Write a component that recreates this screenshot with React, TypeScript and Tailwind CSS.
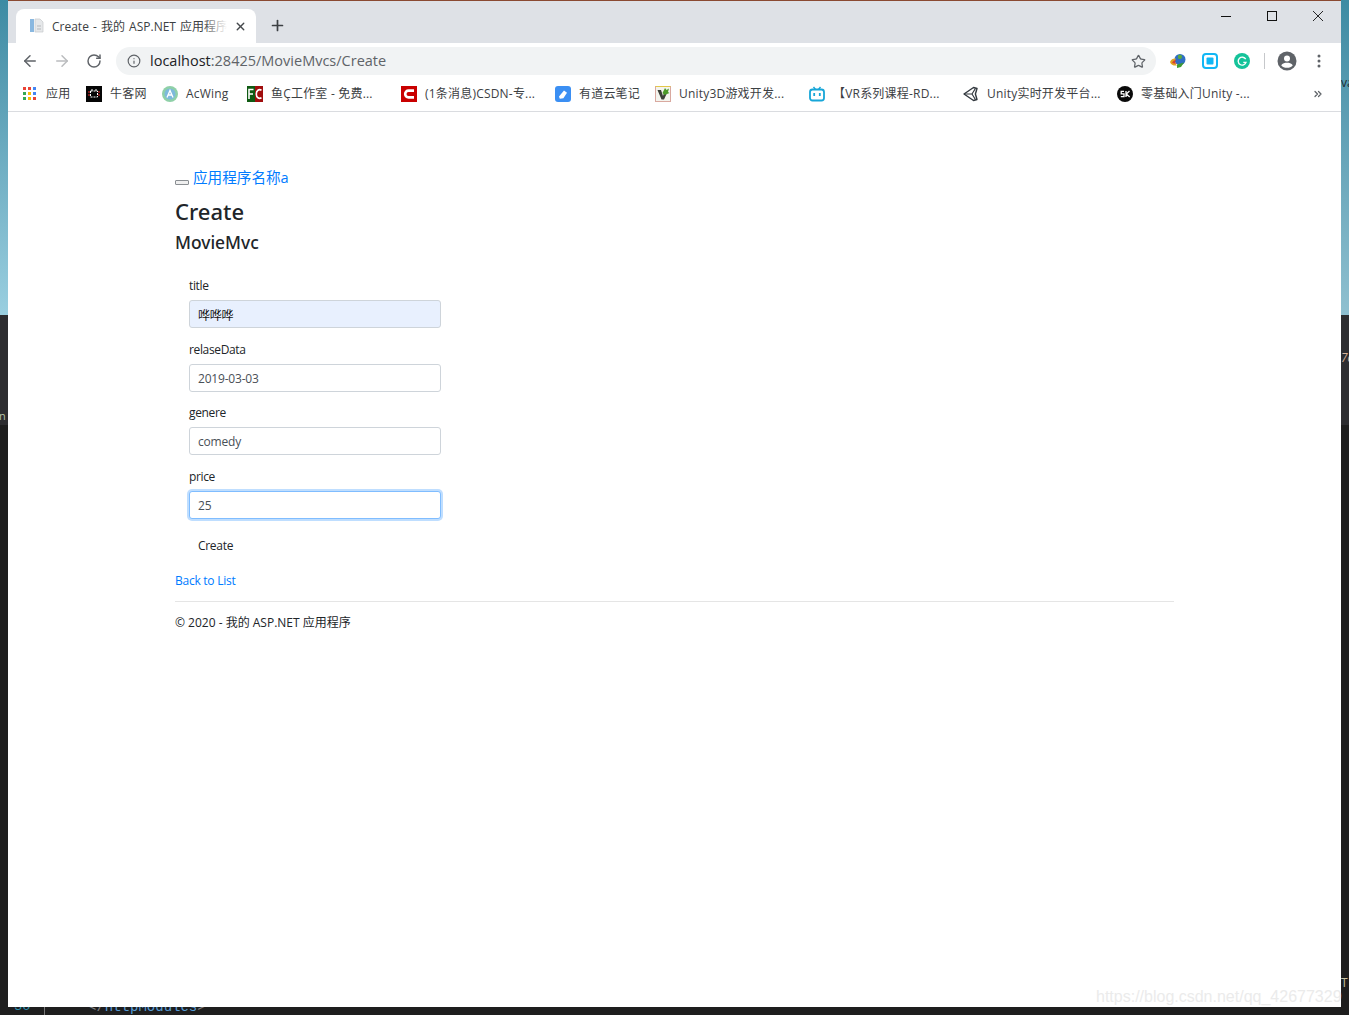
import React from 'react';
import { ArrowLeft, ArrowRight, ChevronsRight, Info, Plus, RotateCw, Star, X } from 'lucide-react';

const font = "font-['Open_Sans','Noto_Sans_CJK_SC',sans-serif]";

const Apps = () => (
    <svg width="14" height="14" viewBox="0 0 14 14">
        <rect x="0" y="0" width="3" height="3" fill="#ea4335" />
        <rect x="5" y="0" width="3" height="3" fill="#ea4335" />
        <rect x="10" y="0" width="3" height="3" fill="#4285f4" />
        <rect x="0" y="5" width="3" height="3" fill="#34a853" />
        <rect x="5" y="5" width="3" height="3" fill="#fbbc05" />
        <rect x="10" y="5" width="3" height="3" fill="#4285f4" />
        <rect x="0" y="10" width="3" height="3" fill="#34a853" />
        <rect x="5" y="10" width="3" height="3" fill="#fbbc05" />
        <rect x="10" y="10" width="3" height="3" fill="#ea4335" />
    </svg>
);

const Nowcoder = () => (
    <svg width="16" height="16" viewBox="0 0 16 16">
        <rect width="16" height="16" fill="#050505" />
        <rect x="4.500" y="5" width="7" height="6" fill="none" stroke="#fff" strokeWidth="1" strokeDasharray="2 1" />
        <path d="M6 3v2M10 3v2" stroke="#fff" />
        <path d="M2 6h2M2 9h2M12 6h2M12 9h2" stroke="#e33" />
    </svg>
);

const AcWing = () => (
    <svg width="16" height="16" viewBox="0 0 16 16">
        <circle cx="8" cy="8" r="8" fill="#8fd0a8" />
        <circle cx="8" cy="8" r="5.500" fill="#7db9dc" />
        <path d="M5 11.500 8 4.500l3 7M6.200 9h3.600" stroke="#fff" strokeWidth="1.3" fill="none" />
    </svg>
);

const Fishc = () => (
    <svg width="16" height="16" viewBox="0 0 16 16">
        <rect width="8" height="16" fill="#0f5a12" />
        <rect x="8" width="8" height="16" fill="#a00d0d" />
        <path d="M2 13V3.500h4.500M2 8h4" stroke="#fff" strokeWidth="1.6" fill="none" />
        <path d="M14.500 4.200C12 2.800 9.300 4.400 9.300 8s2.700 5.200 5.200 3.800" stroke="#fff" strokeWidth="1.6" fill="none" />
    </svg>
);

const Csdn = () => (
    <svg width="16" height="16" viewBox="0 0 16 16">
        <rect width="16" height="16" fill="#c90000" />
        <path d="M13 4.600H7.500C5.500 4.600 4.200 6 4.200 8s1.300 3.400 3.300 3.400H13" stroke="#fff" strokeWidth="2.600" fill="none" />
    </svg>
);

const Youdao = () => (
    <svg width="16" height="16" viewBox="0 0 16 16">
        <rect width="16" height="16" rx="3" fill="#3b8ff3" />
        <path d="M4 10.500 9 4.500l3 2.200-3.600 5.600-3.600.5z" fill="#fff" />
    </svg>
);

const Unity3d = () => (
    <svg width="16" height="16" viewBox="0 0 16 16">
        <rect x="0.500" y="0.500" width="15" height="15" fill="#f4f4ee" stroke="#d9a9a0" />
        <path d="M0.500 0.500h15" stroke="#e3c74a" />
        <path d="M2.500 4H6l2 6 1-3h3l-3 6.500H6.500z" fill="#3c4038" />
        <path d="M7.500 7 10 2l1.500 2L14 2.500 13 6l1.500 1-5 2z" fill="#4c9a2a" />
    </svg>
);

const Bilibili = () => (
    <svg width="16" height="16" viewBox="0 0 16 16">
        <path d="M4.500 1 6.500 3.500M11.500 1 9.500 3.500" stroke="#17a6d8" strokeWidth="1.400" />
        <rect x="1" y="3.500" width="14" height="11" rx="2.500" fill="none" stroke="#17a6d8" strokeWidth="1.800" />
        <rect x="4.300" y="7" width="1.800" height="3" fill="#17a6d8" />
        <rect x="9.900" y="7" width="1.800" height="3" fill="#17a6d8" />
    </svg>
);

const UnityLogo = () => (
    <svg width="16" height="16" viewBox="0 0 16 16">
        <path d="M1 8 10.500 1.500l3.500 1-1.600 5.500 1.600 5.500-3.500 1z" fill="none" stroke="#33393f" strokeWidth="1.400" strokeLinejoin="round" />
        <path d="M1 8h8l3.400-5.500M9 8l3.400 5.500" fill="none" stroke="#33393f" strokeWidth="1.200" />
    </svg>
);

const Sk = () => (
    <svg width="16" height="16" viewBox="0 0 16 16">
        <circle cx="8" cy="8" r="8" fill="#0a0a0a" />
        <path d="M7 5.300H4.200v2.600H7v2.700H3.800M9 5v6M12.500 5 9.300 8l3.400 3" stroke="#fff" strokeWidth="1.300" fill="none" />
    </svg>
);

const Idm = () => (
    <svg width="18" height="16" viewBox="0 0 18 16">
        <circle cx="11" cy="6.500" r="5.500" fill="#2f6fc4" />
        <path d="M9 2.500c2-1.500 4-.5 4 1.500s-3 3-4 1z" fill="#5cab3c" />
        <path d="M1 9c1-3 4-4 6-3.500L5 9l3 3.500C5 13 2 12 1 9z" fill="#e2a321" />
        <path d="M3 10c1-2 2-3 4-3l-1 2 2 2z" fill="#d8402c" />
        <path d="M8 15V11.500L15 9.500 12 14z" fill="#3f9a32" />
    </svg>
);

const Ext = () => (
    <svg width="16" height="16" viewBox="0 0 16 16">
        <rect x="1" y="1" width="14" height="14" rx="3" fill="#fff" stroke="#12b7f5" strokeWidth="2" />
        <rect x="4.500" y="4.500" width="7" height="7" rx="1" fill="#12b7f5" />
    </svg>
);

const Grammarly = () => (
    <svg width="16" height="16" viewBox="0 0 16 16">
        <circle cx="8" cy="8" r="8" fill="#15c39a" />
        <path d="M11.700 6.200A4 4 0 1 0 12 9.400H9.300" stroke="#fff" strokeWidth="1.400" fill="none" />
    </svg>
);

const Avatar = () => (
    <svg width="20" height="20" viewBox="0 0 20 20">
        <circle cx="10" cy="10" r="9.500" fill="#5f6368" />
        <circle cx="10" cy="7.500" r="3" fill="#fff" />
        <path d="M4.200 14.200C5.500 12 8 11.700 10 11.700s4.500.3 5.800 2.500C14.500 16 12.300 16.800 10 16.800s-4.500-.8-5.800-2.600z" fill="#fff" />
    </svg>
);

const bookmarks = [
    { icon: <Apps />, label: '应用', width: 'w-[63px]', slot: 'w-[23px]' },
    { icon: <Nowcoder />, label: '牛客网', width: 'w-[76px]', slot: 'w-[24px]' },
    { icon: <AcWing />, label: 'AcWing', width: 'w-[85px]', slot: 'w-[24px]' },
    { icon: <Fishc />, label: '鱼Ç工作室 - 免费...', width: 'w-[154px]', slot: 'w-[24px]' },
    { icon: <Csdn />, label: '(1条消息)CSDN-专...', width: 'w-[154px]', slot: 'w-[24px]' },
    { icon: <Youdao />, label: '有道云笔记', width: 'w-[100px]', slot: 'w-[24px]' },
    { icon: <Unity3d />, label: 'Unity3D游戏开发...', width: 'w-[154px]', slot: 'w-[24px]' },
    { icon: <Bilibili />, label: '【VR系列课程-RD...', width: 'w-[154px]', slot: 'w-[24px]' },
    { icon: <UnityLogo />, label: 'Unity实时开发平台...', width: 'w-[154px]', slot: 'w-[24px]' },
    { icon: <Sk />, label: '零基础入门Unity -...', width: 'w-[150px]', slot: 'w-[24px]' },
];

const Field = ({ label, value, tone, gap }: { label: string; value: string; tone?: 'autofill' | 'focus'; gap: string }) => (
    <div className={gap}>
        <label className="block h-[20px] text-[12px] leading-[11px] tracking-[-0.35px] text-[#212529]">{label}</label>
        <input
            readOnly
            value={value}
            className={`block w-[252px] h-[28px] rounded-[3px] border px-[8px] pt-[1px] text-[12px] tracking-[-0.2px] ${
                tone === 'autofill'
                    ? 'bg-[#e8f0fe] border-[#ced4da] text-[#111]'
                    : tone === 'focus'
                    ? 'bg-white border-[#80bdff] text-[#495057] shadow-[0_0_0_2px_rgba(0,123,255,0.25)] outline-none'
                    : 'bg-white border-[#ced4da] text-[#495057]'
            }`}
        />
    </div>
);

export default function App() {
    return (
        <div className={`relative flex w-[1349px] h-[1015px] overflow-hidden bg-[#1e1e1e] ${font}`}>
            {/* desktop behind the window, left */}
            <div className="w-[8px] flex flex-col shrink-0">
                <div className="h-[315px] bg-gradient-to-b from-[#3d8ba3] to-[#9acfe0]" />
                <div className="h-[110px] bg-[#2d2d30] overflow-hidden flex items-end">
                    <span className="text-[11px] leading-[18px] ml-[-1px] text-[#b8c4a8]">n</span>
                </div>
                <div className="flex-1 bg-[#1e1e1e]" />
            </div>

            <div className="w-[1333px] flex flex-col shrink-0">
                <div className="flex-1 flex flex-col bg-white">
                    {/* tab strip */}
                    <div className="h-[43px] flex bg-[#dee1e6] border-t border-[#8a4a32] shrink-0">
                        <div className="ml-[8px] mt-[8px] w-[240px] h-[34px] bg-white rounded-t-[8px] flex items-center pl-[13px] pr-[9px] shrink-0">
                            <svg width="16" height="16" viewBox="0 0 16 16" className="shrink-0">
                                <rect x="1" y="1" width="4" height="13" fill="#8ab8e0" />
                                <path d="M6 1h5l3 3v10H6z" fill="#e6e8ea" stroke="#c5c8cb" strokeWidth="0.7" />
                                <path d="M8 8h4M8 11h4" stroke="#b5b8bb" />
                            </svg>
                            <div className="relative ml-[7px] w-[175px] pt-[2px] overflow-hidden whitespace-nowrap text-[12px] [word-spacing:1px] text-[#3c4043]">
                                Create - 我的 ASP.NET 应用程序
                                <div className="absolute right-0 top-0 bottom-0 w-[24px] bg-gradient-to-r from-transparent to-white" />
                            </div>
                            <X size={13} strokeWidth={2.5} className="ml-[7px] mt-[1px] text-[#45484c] shrink-0" />
                        </div>
                        <Plus size={17} strokeWidth={2.4} className="ml-[13px] mt-[16px] text-[#3c4043] shrink-0" />
                        <div className="ml-auto flex items-start text-[#111]">
                            <div className="w-[46px] h-[29px] flex items-center justify-center">
                                <svg width="10" height="10" viewBox="0 0 10 10"><path d="M0 5.500h10" stroke="currentColor" /></svg>
                            </div>
                            <div className="w-[46px] h-[29px] flex items-center justify-center">
                                <svg width="10" height="10" viewBox="0 0 10 10"><rect x="0.500" y="0.500" width="9" height="9" fill="none" stroke="currentColor" /></svg>
                            </div>
                            <div className="w-[46px] h-[29px] flex items-center justify-center">
                                <svg width="10" height="10" viewBox="0 0 10 10"><path d="M0 0l10 10M10 0 0 10" stroke="currentColor" strokeWidth="0.9" /></svg>
                            </div>
                        </div>
                    </div>

                    {/* toolbar */}
                    <div className="h-[36px] flex items-center bg-white shrink-0">
                        <ArrowLeft size={18} strokeWidth={2} className="ml-[13px] text-[#5f6368] shrink-0" />
                        <ArrowRight size={18} strokeWidth={2} className="ml-[14px] text-[#babcbe] shrink-0" />
                        <RotateCw size={16} strokeWidth={2.2} className="ml-[15px] text-[#5f6368] shrink-0" />
                        <div className="ml-[14px] w-[1040px] h-[28px] rounded-full bg-[#f1f3f4] flex items-center pl-[11px] pr-[10px] shrink-0">
                            <Info size={14} strokeWidth={2} className="text-[#5f6368] shrink-0" />
                            <span className="ml-[9px] text-[14.5px] whitespace-nowrap text-[#5f6368]">
                                <span className="text-[#202124]">localhost</span>:28425/MovieMvcs/Create
                            </span>
                            <Star size={15} strokeWidth={2} className="ml-auto text-[#5f6368] shrink-0" />
                        </div>
                        <div className="ml-[13px] flex items-center gap-[15px] shrink-0">
                            <Idm />
                            <Ext />
                            <div className="ml-[1px] flex"><Grammarly /></div>
                        </div>
                        <div className="ml-[14px] w-px h-[16px] bg-[#c6c8cb] shrink-0" />
                        <div className="ml-[12px] shrink-0"><Avatar /></div>
                        <svg width="4" height="14" viewBox="0 0 4 14" className="ml-[20px] shrink-0">
                            <circle cx="2" cy="2" r="1.500" fill="#5f6368" />
                            <circle cx="2" cy="7" r="1.500" fill="#5f6368" />
                            <circle cx="2" cy="12" r="1.500" fill="#5f6368" />
                        </svg>
                    </div>

                    {/* bookmarks bar */}
                    <div className="h-[33px] flex items-center pl-[15px] pb-[2px] bg-white border-b border-[#dadce0] shrink-0">
                        {bookmarks.map((b) => (
                            <div key={b.label} className={`${b.width} flex items-center shrink-0 whitespace-nowrap text-[12px] tracking-[0.2px] text-[#3c4043]`}>
                                <span className={`${b.slot} shrink-0 flex`}>{b.icon}</span>
                                <span>{b.label}</span>
                            </div>
                        ))}
                        <ChevronsRight size={12} strokeWidth={2.5} className="ml-[45px] text-[#5f6368] shrink-0" />
                    </div>

                    {/* page */}
                    <div className="pl-[167px] w-[1166px] pt-[57px] text-[#212529]">
                        <div className="h-[18px] flex items-end whitespace-nowrap">
                            <button className="w-[14px] h-[5px] mb-[2px] border border-[#8a8e92] bg-[#efefef] rounded-[1px]" />
                            <a className="ml-[4px] mb-[1px] text-[14.6px] leading-[18px] text-[#007bff]">应用程序名称a</a>
                        </div>
                        <h1 className="mt-[10px] text-[22px] leading-[28px] font-medium font-['Noto_Sans',sans-serif]">Create</h1>
                        <h4 className="mt-[5px] text-[17.4px] leading-[24px] font-medium font-['Noto_Sans',sans-serif]">MovieMvc</h4>
                        <div className="mt-[26px] ml-[14px]">
                            <Field label="title" value="哗哗哗" tone="autofill" gap="mb-[16px]" />
                            <Field label="relaseData" value="2019-03-03" gap="mb-[15px]" />
                            <Field label="genere" value="comedy" gap="mb-[16px]" />
                            <Field label="price" value="25" tone="focus" gap="mb-[18px]" />
                            <button className="block ml-[9px] h-[18px] text-[12px] leading-[18px] tracking-[-0.3px] text-[#212529]">Create</button>
                        </div>
                        <a className="block mt-[17px] h-[18px] text-[12px] leading-[18px] tracking-[-0.25px] text-[#007bff]">Back to List</a>
                        <div className="mt-[11px] border-t border-[#e5e5e5]" />
                        <p className="mt-[12px] text-[12px] leading-[18px] whitespace-nowrap">© 2020 - 我的 ASP.NET 应用程序</p>
                    </div>
                </div>

                {/* code editor showing under the window */}
                <div className="h-[8px] overflow-hidden bg-[#1e1e1e] shrink-0 font-['Liberation_Mono',monospace]">
                    <div className="flex items-start h-[8px]">
                        <span className="ml-[6px] mt-[-8px] text-[13.7px] leading-[16px] text-[#2b91af]">30</span>
                        <span className="ml-[13.6px] h-[8px] w-px bg-[#777]" />
                        <span className="ml-[43px] mt-[-8px] text-[14px] leading-[16px] text-[#569cd6] whitespace-nowrap">
                            <span className="text-[#808080]">&lt;/</span>httpModules<span className="text-[#808080]">&gt;</span>
                        </span>
                    </div>
                </div>
            </div>

            {/* desktop behind the window, right */}
            <div className="w-[8px] flex flex-col shrink-0 overflow-hidden text-[12px] leading-[14px]">
                <div className="h-[315px] pt-[76px] bg-gradient-to-b from-[#3d8ba3] to-[#8fc0d0] text-[#1c2a30]">va</div>
                <div className="h-[110px] pt-[36px] bg-[#2d2d30] text-[#d8b49a] italic">7c</div>
                <div className="flex-1 pt-[551px] bg-[#1e1e1e] text-[#c9c2a5]">T</div>
            </div>

            <div className="absolute left-[1096px] top-[986px] text-[16px] leading-[22px] whitespace-nowrap text-[#ebebeb] font-['Liberation_Sans',sans-serif]">
                https://blog.csdn.net/qq_42677329
            </div>
        </div>
    );
}
